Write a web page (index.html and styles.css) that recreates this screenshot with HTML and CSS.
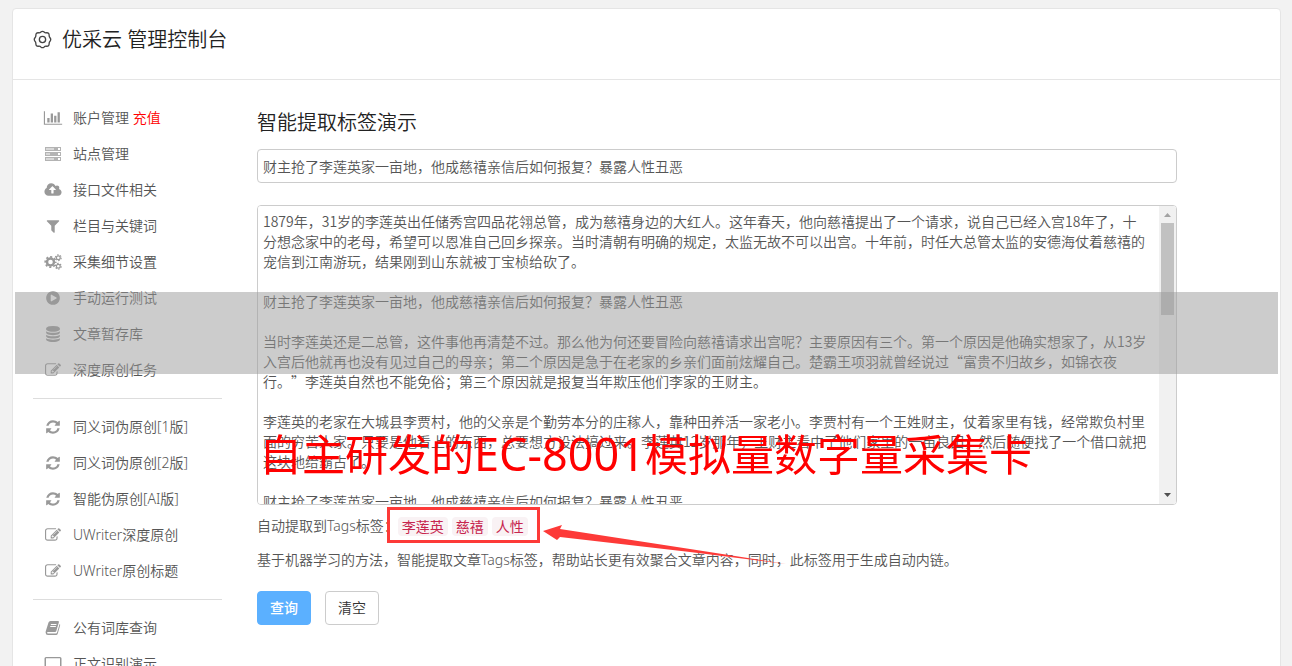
FILE: index.html
```html
<!DOCTYPE html>
<html lang="zh-CN">
<head>
    <meta charset="UTF-8">
    <meta name="viewport" content="width=device-width, initial-scale=1.0">
    <title>优采云 管理控制台</title>
    <link rel="stylesheet" href="styles.css">
</head>
<body>
    <!-- icon set -->
    <svg class="sprite" aria-hidden="true">
        <symbol id="i-chart" viewBox="0 0 2048 1792"><path d="M640 896v512h-256v-512h256zm384-512v1024h-256v-1024h256zm1024 1152v128h-2048v-1536h128v1408h1920zm-640-896v768h-256v-768h256zm384-384v1152h-256v-1152h256z"/></symbol>
        <symbol id="i-server" viewBox="0 0 18 16"><path opacity=".75" fill-rule="evenodd" d="M1 1h16v4H1zM2 2.500v1h8v-1zM14 2v2h2V2zM1 6h16v4H1zM2 7.500v1h4v-1zM14 7v2h2V7zM1 11h16v4H1zM2 12.500v1h8v-1zM14 12v2h2v-2z"/></symbol>
        <symbol id="i-upload" viewBox="0 0 1920 1792"><path d="M1280 864q0-14-9-23l-352-352q-9-9-23-9t-23 9l-351 351q-10 12-10 24 0 14 9 23t23 9h224v352q0 13 9.500 22.500t22.500 9.500h192q13 0 22.500-9.500t9.500-22.500v-352h224q13 0 22.500-9.500t9.500-22.500zm640 288q0 159-112.500 271.500t-271.500 112.500h-1088q-185 0-316.500-131.500t-131.500-316.500q0-130 70-240t188-165q-2-30-2-43 0-212 150-362t362-150q156 0 285.500 87t188.500 231q71-62 166-62 106 0 181 75t75 181q0 76-41 138 130 31 213.500 135.500t83.500 238.500z"/></symbol>
        <symbol id="i-filter" viewBox="0 0 1792 1792"><path d="M1595 295q17 41-14 70l-493 493v742q0 42-39 59-13 5-25 5-27 0-45-19l-256-256q-19-19-19-45v-486l-493-493q-31-29-14-70 17-39 59-39h1280q42 0 59 39z"/></symbol>
        <symbol id="i-cogs" viewBox="0 0 18 16">
            <g fill="none" stroke="currentColor">
                <circle cx="6.500" cy="8" r="3.500" stroke-width="2.400"/>
                <circle cx="6.500" cy="8" r="5.200" stroke-width="1.800" stroke-dasharray="2.040 2.044" stroke-dashoffset="1"/>
                <circle cx="14.300" cy="3.700" r="1.900" stroke-width="1.200"/>
                <circle cx="14.300" cy="3.700" r="2.900" stroke-width="1.100" stroke-dasharray="1.500 1.537"/>
                <circle cx="14.300" cy="12.300" r="1.900" stroke-width="1.200"/>
                <circle cx="14.300" cy="12.300" r="2.900" stroke-width="1.100" stroke-dasharray="1.500 1.537"/>
            </g>
        </symbol>
        <symbol id="i-play" viewBox="0 0 1792 1792"><path d="M896 128q209 0 385.500 103t279.500 279.500 103 385.500-103 385.500-279.500 279.500-385.500 103-385.500-103-279.500-279.500-103-385.500 103-385.500 279.500-279.500 385.500-103zm384 823q32-18 32-55t-32-55l-544-320q-31-19-64-1-32 19-32 56v640q0 37 32 56 16 8 32 8 17 0 32-9z"/></symbol>
        <symbol id="i-database" viewBox="0 0 1792 1792"><path d="M896 768q237 0 443-43t325-127v170q0 69-103 128t-280 93.500-385 34.500-385-34.500-280-93.500-103-128v-170q119 84 325 127t443 43zm0 768q237 0 443-43t325-127v170q0 69-103 128t-280 93.500-385 34.500-385-34.500-280-93.500-103-128v-170q119 84 325 127t443 43zm0-384q237 0 443-43t325-127v170q0 69-103 128t-280 93.500-385 34.500-385-34.500-280-93.500-103-128v-170q119 84 325 127t443 43zm0-1152q208 0 385 34.500t280 93.500 103 128v128q0 69-103 128t-280 93.500-385 34.500-385-34.500-280-93.500-103-128v-128q0-69 103-128t280-93.500 385-34.500z"/></symbol>
        <symbol id="i-edit" viewBox="0 0 1792 1792"><path d="M888 1184l116-116-152-152-116 116v56h96v96h56zm440-720q-16-16-33 1l-350 350q-17 17-1 33t33-1l350-350q17-17 1-33zm80 594v190q0 119-84.500 203.500t-203.500 84.500h-832q-119 0-203.500-84.500t-84.500-203.500v-832q0-119 84.500-203.500t203.500-84.500h832q63 0 117 25 15 7 18 23 3 17-9 29l-49 49q-14 14-32 8-23-6-45-6h-832q-66 0-113 47t-47 113v832q0 66 47 113t113 47h832q66 0 113-47t47-113v-126q0-13 9-22l64-64q15-15 35-7t20 29zm-96-738l288 288-672 672h-288v-288zm444 132l-92 92-288-288 92-92q28-28 68-28t68 28l152 152q28 28 28 68t-28 68z"/></symbol>
        <symbol id="i-refresh" viewBox="0 0 1792 1792"><path d="M1639 1056q0 5-1 7-64 268-268 434.500t-478 166.500q-146 0-282.500-55t-243.500-157l-129 129q-19 19-45 19t-45-19-19-45v-448q0-26 19-45t45-19h448q26 0 45 19t19 45-19 45l-137 137q71 66 161 102t187 36q134 0 250-65t186-179q11-17 53-117 8-23 30-23h192q13 0 22.500 9.500t9.500 22.500zm25-800v448q0 26-19 45t-45 19h-448q-26 0-45-19t-19-45 19-45l138-138q-148-137-349-137-134 0-250 65t-186 179q-11 17-53 117-8 23-30 23h-199q-13 0-22.500-9.500t-9.500-22.500v-7q65-268 270-434.500t480-166.500q146 0 284 55.500t245 156.500l130-129q19-19 45-19t45 19 19 45z"/></symbol>
        <symbol id="i-book" viewBox="0 0 16 16"><path fill-rule="evenodd" d="M5.500 1H13q1.200 0 .9 1.200L11.300 11q-.3 1-1.300 1H3q-1 0-1 .8 0 .7 1 .7h8q.8 0 1-.7L14.600 4q.8.400.5 1.400L12.800 13.500q-.4 1.500-1.800 1.500H3Q.6 15 .6 12.500.6 11.500 1 10.500L3.500 2.500Q4 1 5.500 1zM6 4l-.3 1h5.600l.3-1zM5.400 6l-.3 1h5.600l.3-1z"/></symbol>
        <symbol id="i-laptop" viewBox="0 0 18 16"><path fill-rule="evenodd" d="M2 1h14q1.500 0 1.500 1.500v8q0 1.500-1.500 1.500H2Q.5 12 .5 10.500v-8Q.5 1 2 1zM2 2.300v8.400h14V2.300zM0 13h18v1q0 1-1 1H1q-1 0-1-1z"/></symbol>
    </svg>

    <div class="panel">
        <header class="panel-head">
            <svg class="gear" viewBox="0 0 20 20" aria-hidden="true">
                <path d="M8.200 2.200Q10 .6 11.800 2.200Q12.600 3.200 14.300 2.900Q16.900 2.700 17 5.500Q16.900 7.300 17.900 8.200Q19.400 10 17.900 11.800Q16.900 12.700 17 14.500Q16.900 17.300 14.300 17.100Q12.600 16.800 11.800 17.800Q10 19.400 8.200 17.800Q7.400 16.800 5.700 17.100Q3.100 17.300 3 14.500Q3.100 12.700 2.100 11.800Q.6 10 2.100 8.200Q3.100 7.300 3 5.500Q3.100 2.700 5.700 2.900Q7.400 3.200 8.200 2.200z"/>
                <circle cx="10" cy="10" r="3.300"/>
            </svg>
            <h1>优采云 管理控制台</h1>
        </header>

        <div class="panel-body">
            <nav class="sidebar">
                <ul>
                    <li><a href="#"><svg class="icon"><use href="#i-chart"/></svg><span>账户管理 <em>充值</em></span></a></li>
                    <li><a href="#"><svg class="icon"><use href="#i-server"/></svg>站点管理</a></li>
                    <li><a href="#"><svg class="icon"><use href="#i-upload"/></svg>接口文件相关</a></li>
                    <li><a href="#"><svg class="icon"><use href="#i-filter"/></svg>栏目与关键词</a></li>
                    <li><a href="#"><svg class="icon"><use href="#i-cogs"/></svg>采集细节设置</a></li>
                    <li><a href="#"><svg class="icon"><use href="#i-play"/></svg>手动运行测试</a></li>
                    <li><a href="#"><svg class="icon"><use href="#i-database"/></svg>文章暂存库</a></li>
                    <li><a href="#"><svg class="icon"><use href="#i-edit"/></svg>深度原创任务</a></li>
                </ul>
                <ul>
                    <li><a href="#"><svg class="icon"><use href="#i-refresh"/></svg>同义词伪原创[1版]</a></li>
                    <li><a href="#"><svg class="icon"><use href="#i-refresh"/></svg>同义词伪原创[2版]</a></li>
                    <li><a href="#"><svg class="icon"><use href="#i-refresh"/></svg>智能伪原创[AI版]</a></li>
                    <li><a href="#"><svg class="icon"><use href="#i-edit"/></svg>UWriter深度原创</a></li>
                    <li><a href="#"><svg class="icon"><use href="#i-edit"/></svg>UWriter原创标题</a></li>
                </ul>
                <ul>
                    <li><a href="#"><svg class="icon"><use href="#i-book"/></svg>公有词库查询</a></li>
                    <li><a href="#"><svg class="icon"><use href="#i-laptop"/></svg>正文识别演示</a></li>
                </ul>
            </nav>

            <main class="content">
                <h2>智能提取标签演示</h2>
                <form>
                    <input type="text" class="field" aria-label="标题" value="财主抢了李莲英家一亩地，他成慈禧亲信后如何报复？暴露人性丑恶">
                    <div class="article">
                        <textarea class="field" aria-label="正文">1879年，31岁的李莲英出任储秀宫四品花翎总管，成为慈禧身边的大红人。这年春天，他向慈禧提出了一个请求，说自己已经入宫18年了，十分想念家中的老母，希望可以恩准自己回乡探亲。当时清朝有明确的规定，太监无故不可以出宫。十年前，时任大总管太监的安德海仗着慈禧的宠信到江南游玩，结果刚到山东就被丁宝桢给砍了。

财主抢了李莲英家一亩地，他成慈禧亲信后如何报复？暴露人性丑恶

当时李莲英还是二总管，这件事他再清楚不过。那么他为何还要冒险向慈禧请求出宫呢？主要原因有三个。第一个原因是他确实想家了，从13岁入宫后他就再也没有见过自己的母亲；第二个原因是急于在老家的乡亲们面前炫耀自己。楚霸王项羽就曾经说过“富贵不归故乡，如锦衣夜行。”李莲英自然也不能免俗；第三个原因就是报复当年欺压他们李家的王财主。

李莲英的老家在大城县李贾村，他的父亲是个勤劳本分的庄稼人，靠种田养活一家老小。李贾村有一个王姓财主，仗着家里有钱，经常欺负村里面的穷苦人家。只要是他看上的东西，总要想方设法搞过来。李莲英12岁那年，王财主看中了他们家里的一亩良田，然后随便找了一个借口就把这块地给霸占了。

财主抢了李莲英家一亩地，他成慈禧亲信后如何报复？暴露人性丑恶</textarea>
                        <div class="scrollbar" aria-hidden="true">
                            <svg viewBox="0 0 7 4"><path d="M0 4L3.500 0L7 4z" fill="#a3a3a3"/></svg>
                            <div class="thumb"></div>
                            <svg viewBox="0 0 7 4"><path d="M0 0L3.500 4L7 0z" fill="#505050"/></svg>
                        </div>
                    </div>
                    <p class="tags">自动提取到Tags标签：<code>李莲英</code><code>慈禧</code><code>人性</code></p>
                    <p class="note">基于机器学习的方法，智能提取文章Tags标签，帮助站长更有效聚合文章内容，同时，此标签用于生成自动内链。</p>
                    <div class="actions">
                        <button type="submit" class="btn btn-primary">查询</button>
                        <button type="reset" class="btn">清空</button>
                    </div>
                </form>
            </main>
        </div>

        <div class="band"></div>
        <div class="caption">自主研发的<span>EC-8001</span>模拟量数字量采集卡</div>
        <div class="mark"></div>
        <svg class="arrow" viewBox="0 0 246 42" aria-hidden="true">
            <path d="M1 8L20 2L18 6L148 26L244 41L148 29L18 14L15 17z"/>
        </svg>
    </div>
</body>
</html>
```
FILE: styles.css
```css
* {
    box-sizing: border-box;
}
body {
    margin: 0;
    padding: 8px 11px 20px 12px;
    background: #f2f2f2;
    color: #555;
    font: 350 14px/20px "Noto Sans", "Noto Sans CJK SC", sans-serif;
    text-spacing-trim: space-all;
}
h1, h2, p, ul {
    margin: 0;
    padding: 0;
    font-weight: inherit;
}
.sprite {
    display: none;
}
.panel {
    position: relative;
    background: #fff;
    border: 1px solid #e5e5e5;
    border-radius: 4px;
}
.panel-head {
    display: flex;
    align-items: center;
    gap: 10px;
    height: 71px;
    padding: 0 20px 10px;
    border-bottom: 1px solid #e5e5e5;
}
.panel-head h1 {
    padding-top: 2px;
    font-size: 20px;
    line-height: 28px;
    color: #222;
}
.gear {
    width: 19px;
    height: 19px;
    fill: none;
    stroke: #444;
    stroke-width: 1.4;
}
.panel-body {
    display: flex;
    padding: 20px 103px 20px 20px;
}

/* sidebar */
.sidebar {
    flex: none;
    width: 189px;
}
.sidebar ul {
    list-style: none;
}
.sidebar ul + ul {
    margin-top: 10px;
    padding-top: 10px;
    border-top: 1px solid #ddd;
}
.sidebar a {
    display: flex;
    align-items: center;
    gap: 10px;
    height: 36px;
    padding-left: 10px;
    color: #555;
    text-decoration: none;
}
.sidebar em {
    color: #f00;
    font-style: normal;
}
.icon {
    width: 20px;
    height: 16px;
    color: #999;
    fill: #999;
}

/* content */
.content {
    flex: 1;
    min-width: 0;
    padding: 10px 0 0 35px;
}
.content h2 {
    margin-bottom: 13px;
    font-size: 20px;
    line-height: 26px;
    color: #222;
}
.field {
    display: block;
    width: 100%;
    height: 34px;
    padding: 5px;
    border: 1px solid #ccc;
    border-radius: 4px;
    background: #fff;
    color: #555;
    font: 350 14px/20px "Noto Sans CJK SC", sans-serif;
    text-spacing-trim: space-all;
    outline: none;
}
.article {
    position: relative;
    margin-top: 22px;
}
.article .field {
    height: 300px;
    padding-right: 26px;
    resize: none;
    scrollbar-width: none;
}
.scrollbar {
    position: absolute;
    top: 1px;
    right: 1px;
    bottom: 1px;
    display: flex;
    flex-direction: column;
    align-items: center;
    width: 17px;
    padding: 7px 0;
    background: #f1f1f1;
    border-radius: 0 3px 3px 0;
}
.scrollbar svg {
    width: 7px;
    height: 4px;
}
.thumb {
    width: 13px;
    height: 92px;
    margin: 6px 0 auto;
    background: #c1c1c1;
}
.tags {
    display: flex;
    align-items: center;
    margin-top: 11px;
}
.tags code {
    margin-right: 4px;
    padding: 0 4px;
    border-radius: 4px;
    background: #f9f2f4;
    color: #c7254e;
    font: 14px/19px "Noto Sans", "Noto Sans CJK SC", sans-serif;
}
.note {
    margin-top: 14px;
}
.actions {
    display: flex;
    gap: 14px;
    margin-top: 21px;
}
.btn {
    width: 54px;
    height: 34px;
    padding: 0;
    border: 1px solid #ccc;
    border-radius: 4px;
    background: #fff;
    color: #333;
    font: inherit;
    cursor: pointer;
}
.btn-primary {
    border-color: #5bb0ff;
    background: #5bb0ff;
    color: #fff;
    font-weight: 500;
}

/* annotations drawn over the page */
.band, .caption, .mark, .arrow {
    position: absolute;
    pointer-events: none;
}
.band {
    top: 283px;
    left: 2px;
    right: 2px;
    height: 82px;
    background: rgba(153, 153, 153, 0.5);
}
.caption {
    top: 415px;
    left: 246px;
    color: #f00;
    font-weight: 400;
    font-size: 43px;
    line-height: 60px;
    white-space: nowrap;
}
.caption span {
    font-size: 45px;
}
.mark {
    top: 498px;
    left: 374px;
    width: 153px;
    height: 36px;
    border: 3px solid #fd3a38;
}
.arrow {
    top: 514px;
    left: 529px;
    width: 246px;
    height: 42px;
    fill: #fd3a38;
}
```
